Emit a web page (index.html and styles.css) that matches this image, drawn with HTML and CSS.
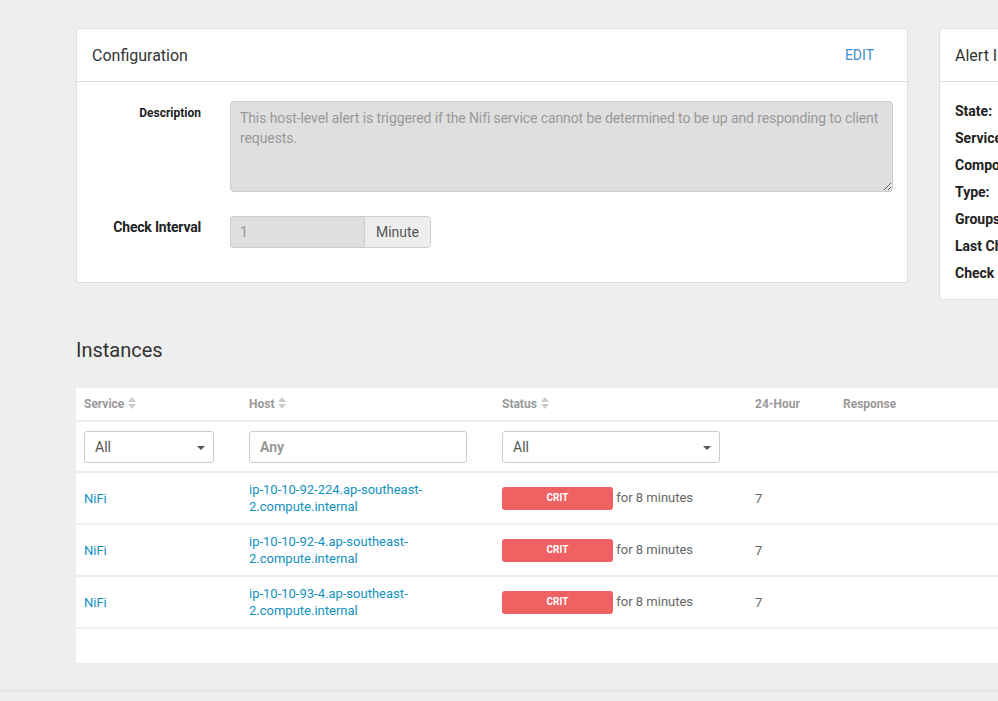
FILE: index.html
```html
<!DOCTYPE html>
<html>
<head>
    <meta charset="utf-8">
    <link rel="stylesheet" href="styles.css">
</head>
<body>
    <div class="page">
        <div class="top-row">
            <div class="panel config">
                <div class="panel-heading">
                    <span class="panel-title">Configuration</span>
                    <a class="edit-link">EDIT</a>
                </div>
                <div class="panel-body">
                    <div class="form-row">
                        <label class="desc-label">Description</label>
                        <textarea class="desc-box" disabled>This host-level alert is triggered if the Nifi service cannot be determined to be up and responding to client requests.</textarea>
                    </div>
                    <div class="form-row interval-row">
                        <label class="interval-label">Check Interval</label>
                        <div class="input-group">
                            <input type="text" class="interval-input" value="1" disabled/>
                            <span class="addon">Minute</span>
                        </div>
                    </div>
                </div>
            </div>
            <div class="panel alert-info">
                <div class="panel-heading">
                    <span class="panel-title">Alert Info</span>
                </div>
                <div class="panel-body info-list">
                    <div class="info-item">State:</div>
                    <div class="info-item">Service:</div>
                    <div class="info-item">Component:</div>
                    <div class="info-item">Type:</div>
                    <div class="info-item">Groups:</div>
                    <div class="info-item">Last Checked:</div>
                    <div class="info-item">Check Count:</div>
                </div>
            </div>
        </div>

        <h2 class="section-title">Instances</h2>

        <div class="table-wrap">
            <table class="instances">
                <thead>
                    <tr class="head-row">
                        <th class="col-service">Service <span class="sort"><i class="up"></i><i class="down"></i></span></th>
                        <th class="col-host">Host <span class="sort"><i class="up"></i><i class="down"></i></span></th>
                        <th class="col-status">Status <span class="sort"><i class="up"></i><i class="down"></i></span></th>
                        <th class="col-day">24-Hour</th>
                        <th class="col-resp">Response</th>
                    </tr>
                    <tr class="filter-row">
                        <th><div class="select small">All<span class="caret"></span></div></th>
                        <th><div class="text-filter">Any</div></th>
                        <th><div class="select wide">All<span class="caret"></span></div></th>
                        <th></th>
                        <th></th>
                    </tr>
                </thead>
                <tbody>
                    <tr>
                        <td><a>NiFi</a></td>
                        <td><a>ip-10-10-92-224.ap-southeast-<br>2.compute.internal</a></td>
                        <td><span class="badge">CRIT</span> for 8 minutes</td>
                        <td>7</td>
                        <td></td>
                    </tr>
                    <tr>
                        <td><a>NiFi</a></td>
                        <td><a>ip-10-10-92-4.ap-southeast-<br>2.compute.internal</a></td>
                        <td><span class="badge">CRIT</span> for 8 minutes</td>
                        <td>7</td>
                        <td></td>
                    </tr>
                    <tr>
                        <td><a>NiFi</a></td>
                        <td><a>ip-10-10-93-4.ap-southeast-<br>2.compute.internal</a></td>
                        <td><span class="badge">CRIT</span> for 8 minutes</td>
                        <td>7</td>
                        <td></td>
                    </tr>
                </tbody>
            </table>
            <div class="table-footer"></div>
        </div>
    </div>
    <div class="footer"></div>
</body>
</html>
```

FILE: styles.css
```css
body {
    margin: 0;
    background-color: #eeeeee;
    font-family: Roboto, "Liberation Sans", sans-serif;
    color: #333;
    overflow: hidden;
}

.page {
    padding: 28px 0 0 76px;
    width: 1200px;
}

.top-row {
    display: flex;
    gap: 31px;
    align-items: flex-start;
}

.panel {
    background-color: #fff;
    border: 1px solid #dddddd;
    border-radius: 3px;
    flex-shrink: 0;
}

.config {
    width: 830px;
    height: 253px;
}

.alert-info {
    width: 260px;
    height: 270px;
}

.panel-heading {
    height: 52px;
    border-bottom: 1px solid #dddddd;
    display: flex;
    align-items: center;
    justify-content: space-between;
    padding: 0 33px 0 15px;
}

.panel-title {
    font-size: 16px;
    color: #333;
    white-space: nowrap;
}

.edit-link {
    font-size: 14px;
    color: #3c8dcf;
}

.config .panel-body {
    padding: 19px 14px 0 0;
}

.form-row {
    display: flex;
}

.desc-label {
    width: 124px;
    text-align: right;
    font-size: 12px;
    font-weight: bold;
    color: #222;
    padding-top: 5px;
}

.desc-box {
    margin-left: 29px;
    flex: 1;
    height: 91px;
    box-sizing: border-box;
    background-color: #dfdfdf;
    border: 1px solid #cccccc;
    border-radius: 4px;
    padding: 6px 9px;
    font-family: Roboto, "Liberation Sans", sans-serif;
    font-size: 14px;
    line-height: 20px;
    color: #999;
    letter-spacing: -0.1px;
    resize: vertical;
}

.interval-row {
    margin-top: 24px;
}

.interval-label {
    width: 124px;
    text-align: right;
    font-size: 14px;
    font-weight: bold;
    color: #222;
    padding-top: 3px;
    letter-spacing: -0.2px;
}

.input-group {
    margin-left: 29px;
    display: flex;
    height: 32px;
}

.interval-input {
    width: 134px;
    box-sizing: border-box;
    background-color: #dfdfdf;
    border: 1px solid #cccccc;
    border-right: none;
    border-radius: 4px 0 0 4px;
    padding: 0 9px;
    font-family: Roboto, "Liberation Sans", sans-serif;
    font-size: 14px;
    color: #999;
}

.addon {
    width: 67px;
    box-sizing: border-box;
    background-color: #eeeeee;
    border: 1px solid #cccccc;
    border-radius: 0 4px 4px 0;
    font-size: 14px;
    color: #555;
    display: flex;
    align-items: center;
    justify-content: center;
}

.info-list {
    padding: 21px 15px;
}

.info-item {
    font-size: 14px;
    font-weight: bold;
    color: #222;
    height: 27px;
    white-space: nowrap;
}

.section-title {
    margin: 0 0 26px 0;
    padding: 38px 0 0 0;
    font-size: 20px;
    line-height: 24px;
    font-weight: normal;
    color: #333;
}

.table-wrap {
    background-color: #fff;
}

.instances {
    width: 100%;
    border-collapse: collapse;
}

.instances th, .instances td {
    text-align: left;
    padding: 0 8px;
}

.head-row th {
    height: 32px;
    font-size: 12px;
    font-weight: bold;
    color: #999;
    border-bottom: 2px solid #eeeeee;
    vertical-align: middle;
}

.col-service { width: 149px; }
.col-host { width: 237px; }
.col-status { width: 237px; }
.col-day { width: 72px; }

.sort {
    display: inline-block;
    width: 8px;
    height: 13px;
    vertical-align: -2px;
    margin-left: 1px;
}

.sort i {
    display: block;
    width: 0;
    height: 0;
    border-left: 4px solid transparent;
    border-right: 4px solid transparent;
}

.sort .up {
    border-bottom: 5px solid #cccccc;
    margin-bottom: 2px;
}

.sort .down {
    border-top: 5px solid #cccccc;
}

.filter-row th {
    height: 48px;
    padding-top: 1px;
    border-bottom: 2px solid #eeeeee;
    font-weight: normal;
}

.select, .text-filter {
    height: 32px;
    box-sizing: border-box;
    border: 1px solid #cccccc;
    border-radius: 3px;
    padding: 0 10px;
    display: flex;
    align-items: center;
    font-size: 14px;
    color: #555;
    position: relative;
}

.select.small { width: 130px; }
.select.wide { width: 218px; }

.text-filter {
    width: 218px;
    color: #999;
    font-weight: bold;
}

.caret {
    position: absolute;
    right: 8px;
    top: 14px;
    border-left: 4px solid transparent;
    border-right: 4px solid transparent;
    border-top: 4px solid #555;
}

tbody td {
    height: 50px;
    font-size: 13px;
    color: #666;
    border-bottom: 2px solid #eeeeee;
    line-height: 17px;
}

tbody a {
    color: #1491c1;
}

.badge {
    display: inline-block;
    width: 111px;
    height: 23px;
    line-height: 21px;
    background-color: #ef6162;
    border-radius: 3px;
    color: #fff;
    font-size: 10px;
    font-weight: bold;
    text-align: center;
    vertical-align: 1px;
}

.table-footer {
    height: 34px;
}

.footer {
    margin-top: 27px;
    border-top: 2px solid #e4e4e4;
    height: 20px;
}
```
